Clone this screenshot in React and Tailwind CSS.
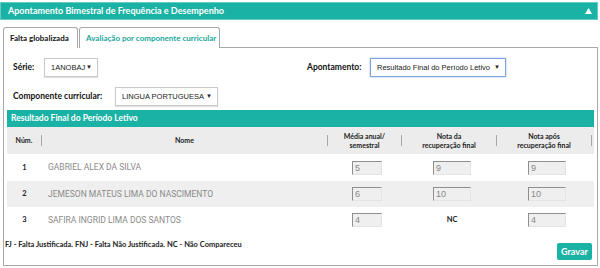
function Select({ w, text, focus }) {
  return (
    <div
      className={`flex shrink-0 items-center justify-between h-[19px] bg-white pl-[6px] pr-[5px] whitespace-nowrap font-['Liberation_Sans',Arial,sans-serif] text-[7.5px] text-[#222] ${w} ${
        focus ? "border border-[#7fa4de] shadow-[0_0_2px_#9fbef0]" : "border border-[#c9c9c9] shadow-[0_1px_1px_#e2e2e2]"
      }`}
    >
      <span>{text}</span>
      <span className="text-[6px]">▼</span>
    </div>
  )
}

function Box({ w, value }) {
  return (
    <div
      className={`h-[14px] ${w} bg-[#efefef] border border-t-[#8f8f8f] border-l-[#8f8f8f] border-r-[#e4e4e4] border-b-[#e4e4e4] pl-[2px] font-['Liberation_Sans',Arial,sans-serif] text-[9px] leading-[12px] text-[#888]`}
    >
      {value}
    </div>
  )
}

function HeadCell({ w, children, sep = true }) {
  return (
    <div className={`flex shrink-0 items-center h-full ${w}`}>
      <div className="flex-1 text-center leading-[9px] whitespace-nowrap">{children}</div>
      {sep && <div className="w-px h-[11px] bg-[#a8a8a8]" />}
    </div>
  )
}

const rows = [
  { n: 1, name: "GABRIEL ALEX DA SILVA", media: "5", rec: "9", apos: "9" },
  { n: 2, name: "JEMESON MATEUS LIMA DO NASCIMENTO", media: "6", rec: "10", apos: "10" },
  { n: 3, name: "SAFIRA INGRID LIMA DOS SANTOS", media: "4", rec: null, apos: "4" },
]

export default function App() {
  return (
    <div className="w-[600px] h-[268px] bg-white font-['Lato',sans-serif] overflow-hidden">
      <div className="mt-[2px] w-[598px] h-[18px] bg-[#1ab2a5] border border-[#63cdc3] flex items-center justify-between pl-[7px] pr-[5px]">
        <span className="text-white font-bold text-[9px] whitespace-nowrap">
          Apontamento Bimestral de Frequência e Desempenho
        </span>
        <svg width="7" height="6" viewBox="0 0 7 6">
          <path d="M3.5 0 L7 6 L0 6 Z" fill="#fff" />
        </svg>
      </div>

      <div className="mt-[7px] flex pl-[3px] h-[21px] w-[598px]">
        <div className="w-[75px] shrink-0 border border-b-0 border-[#a8a8a8] rounded-t-[3px] flex items-center pl-[6px] text-[8px] font-bold text-[#111] whitespace-nowrap">
          Falta globalizada
        </div>
        <div className="ml-[1px] w-[141px] shrink-0 border border-b-0 border-[#a8a8a8] rounded-t-[3px] flex items-center pl-[6px] text-[8px] font-bold text-[#1aa79b] whitespace-nowrap">
          Avaliação por componente curricular
        </div>
        <div className="flex-1 border-b border-[#a8a8a8]" />
      </div>

      <div className="ml-[3px] w-[595px] h-[218px] border border-t-0 border-[#a8a8a8] flex flex-col">
        <div className="flex items-center mt-[10px] h-[19px]">
          <div className="w-[40px] shrink-0 pl-[9px] text-[8.5px] font-bold text-[#111] whitespace-nowrap">Série:</div>
          <Select w="w-[54px]" text="1ANOBAJ" />
          <div className="ml-[209px] w-[63px] shrink-0 text-[8.5px] font-bold text-[#111] whitespace-nowrap">Apontamento:</div>
          <Select w="w-[136px]" text="Resultado Final do Período Letivo" focus />
        </div>
        <div className="flex items-center mt-[10px] h-[19px]">
          <div className="w-[111px] shrink-0 pl-[9px] text-[8.5px] font-bold text-[#111] whitespace-nowrap">Componente curricular:</div>
          <Select w="w-[103px]" text="LINGUA PORTUGUESA" />
        </div>

        <div className="ml-[3px] mt-[4px] w-[587px]">
          <div className="h-[17px] bg-[#1ab2a5] flex items-center pl-[4px] text-white font-bold text-[8.5px] whitespace-nowrap">
            Resultado Final do Período Letivo
          </div>
          <div className="h-[27px] bg-[#ececec] flex text-[7px] font-bold text-[#222]">
            <HeadCell w="w-[35px]">Núm.</HeadCell>
            <HeadCell w="w-[286px]">Nome</HeadCell>
            <HeadCell w="w-[74px]">
              Média anual/
              <br />
              semestral
            </HeadCell>
            <HeadCell w="w-[95px]">
              Nota da
              <br />
              recuperação final
            </HeadCell>
            <HeadCell w="w-[95px]">
              Nota após
              <br />
              recuperação final
            </HeadCell>
          </div>
          {rows.map((r, i) => (
            <div
              key={r.n}
              className={`flex items-center ${i === 0 ? "h-[27px]" : "h-[26px]"} ${i === 1 ? "bg-[#efefef]" : "bg-white"}`}
            >
              <div className="w-[35px] shrink-0 text-center text-[7.5px] font-bold text-[#222]">{r.n}</div>
              <div className="w-[286px] shrink-0 pl-[6px] font-['Roboto',sans-serif] text-[8.5px] text-[#8a8a8a] whitespace-nowrap">{r.name}</div>
              <div className="w-[74px] shrink-0 flex justify-center pl-[4px]">
                <Box w="w-[30px]" value={r.media} />
              </div>
              <div className="w-[95px] shrink-0 flex justify-center pl-[5px]">
                {r.rec ? (
                  <Box w="w-[38px]" value={r.rec} />
                ) : (
                  <span className="text-[7.5px] font-bold text-[#222]">NC</span>
                )}
              </div>
              <div className="w-[95px] shrink-0 flex justify-center pl-[5px]">
                <Box w="w-[38px]" value={r.apos} />
              </div>
            </div>
          ))}
        </div>

        <div className="flex justify-between items-start w-[588px]">
          <div className="mt-[6px] ml-[1px] text-[7.5px] font-bold text-[#222] whitespace-nowrap">
            FJ - Falta Justificada. FNJ - Falta Não Justificada. NC - Não Compareceu
          </div>
          <div className="mt-[10px] w-[35px] h-[17px] rounded-[2px] bg-[#1ab2a5] flex items-center justify-center text-white font-bold text-[9px]">
            Gravar
          </div>
        </div>
      </div>
    </div>
  )
}
